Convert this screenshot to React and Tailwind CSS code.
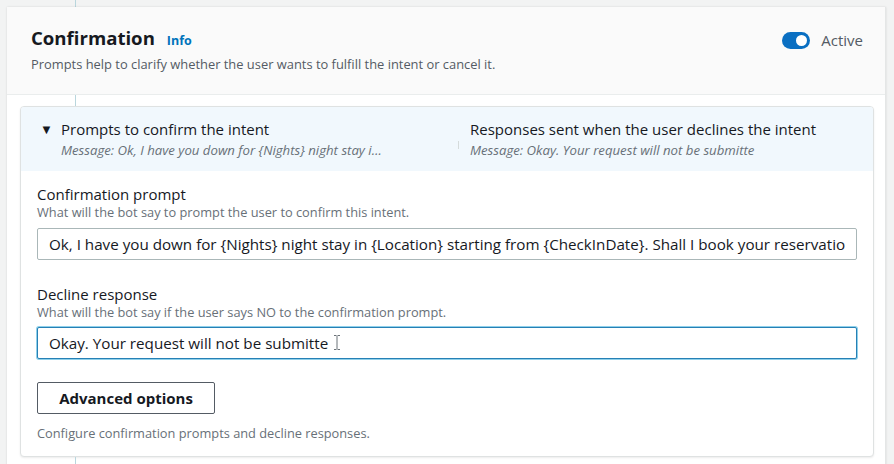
import { useState } from 'react';

const font = { fontFamily: '"Open Sans", "Noto Sans", sans-serif' };

const Toggle = ({ on }) => (
  <span
    className={`relative inline-flex h-[17px] w-[28px] items-center rounded-full ${
      on ? 'bg-[#0a6fc2]' : 'bg-gray-400'
    }`}
  >
    <span className="absolute right-[3px] h-[11px] w-[11px] rounded-full bg-white" />
  </span>
);

const Connector = ({ h }) => (
  <div className={`${h} w-px ml-[68px] bg-[#b9d6dd]`} />
);

const Field = ({ label, help, value, focused, gap }) => (
  <div className="flex flex-col">
    <label className="text-[15px] leading-[20px] text-[#16191f]">{label}</label>
    <p className="text-[12.8px] leading-[16px] text-[#687078]">{help}</p>
    <div className={`${gap} relative`}>
      <input
        readOnly
        value={value}
        className={`h-[32px] w-full rounded-[2px] bg-white px-[11px] text-[15.2px] text-[#16191f] outline-none ${
          focused
            ? 'border border-[#2680b5] shadow-[0_0_0_1px_#8fd0ea]'
            : 'border border-[#aab7b8]'
        }`}
        style={font}
      />
      {focused && (
        <svg className="absolute left-[296px] top-[7px]" width="8" height="17" viewBox="0 0 8 17" fill="none" stroke="#6b7278" strokeWidth="1">
          <path d="M1 1.5h2.5M4.5 1.5H7M4 2v13M1 15.5h2.5M4.5 15.5H7" />
        </svg>
      )}
    </div>
  </div>
);

export default function App() {
  const [active] = useState(true);

  return (
    <div className="h-[464px] w-full overflow-hidden bg-[#f2f3f3]" style={font}>
      <div className="h-[7px] pl-[7px]">
        <Connector h="h-[7px]" />
      </div>
      <div className="ml-[7px] w-[879px] border-r border-[#e4e6e6] bg-white shadow-[0_0_2px_rgba(0,0,0,0.12)]">
        {/* Header */}
        <div className="flex items-start justify-between border-b border-[#eaeded] bg-[#fafafa] pl-[24px] pr-[22px] pt-[20px] pb-[22px]">
          <div>
            <div className="flex items-baseline gap-[12px]">
              <h2 className="text-[18.6px] leading-[22px] font-bold text-[#16191f]">Confirmation</h2>
              <span className="text-[12.5px] font-bold text-[#0073bb]">Info</span>
            </div>
            <p className="mt-[5px] text-[12.9px] leading-[16px] text-[#545b64]">
              Prompts help to clarify whether the user wants to fulfill the intent or cancel it.
            </p>
          </div>
          <div className="mt-[2px] flex items-center gap-[11px]">
            <Toggle on={active} />
            <span className="text-[15px] text-[#545b64]">Active</span>
          </div>
        </div>

        <Connector h="h-[11px]" />

        {/* Inner card */}
        <div className="ml-[13px] w-[854px] overflow-hidden rounded-[4px] border border-[#dfe2e2] bg-white shadow-[0_1px_2px_rgba(0,0,0,0.08)]">
          <div className="grid grid-cols-[437px_1fr] bg-[#f1f8fd] pt-[12px] pb-[13px]">
            <div className="flex pl-[19px]">
              <span className="mt-[3px] w-[21px] text-[13px] leading-[14px] text-[#16191f]">▼</span>
              <div>
                <div className="text-[15px] leading-[20px] text-[#16191f]">Prompts to confirm the intent</div>
                <div className="mt-[3px] text-[13.2px] leading-[16px] italic text-[#687078]">
                  Message: Ok, I have you down for {'{Nights}'} night stay i…
                </div>
              </div>
            </div>
            <div className="flex">
              <span className="mt-[22px] mr-[11px] h-[8px] w-px bg-[#d5dbdb]" />
              <div>
                <div className="text-[15px] leading-[20px] text-[#16191f]">Responses sent when the user declines the intent</div>
                <div className="mt-[3px] text-[13.2px] leading-[16px] italic text-[#687078]">
                  Message: Okay. Your request will not be submitte
                </div>
              </div>
            </div>
          </div>

          <div className="flex flex-col px-[16px] pt-[13px] pb-[15px]">
            <Field
              label="Confirmation prompt"
              help="What will the bot say to prompt the user to confirm this intent."
              value="Ok, I have you down for {Nights} night stay in {Location} starting from {CheckInDate}. Shall I book your reservation?"
              gap="mt-[8px]"
            />
            <div className="mt-[24px]">
              <Field
                label="Decline response"
                help="What will the bot say if the user says NO to the confirmation prompt."
                value="Okay. Your request will not be submitte"
                gap="mt-[7px]"
                focused
              />
            </div>
            <button className="mt-[23px] h-[32px] w-[178px] rounded-[2px] border border-[#545b64] bg-white text-[15px] font-bold text-[#16191f]">
              Advanced options
            </button>
            <p className="mt-[11px] text-[12.8px] leading-[16px] text-[#687078]">
              Configure confirmation prompts and decline responses.
            </p>
          </div>
        </div>

        <Connector h="h-[20px]" />
      </div>
    </div>
  );
}
